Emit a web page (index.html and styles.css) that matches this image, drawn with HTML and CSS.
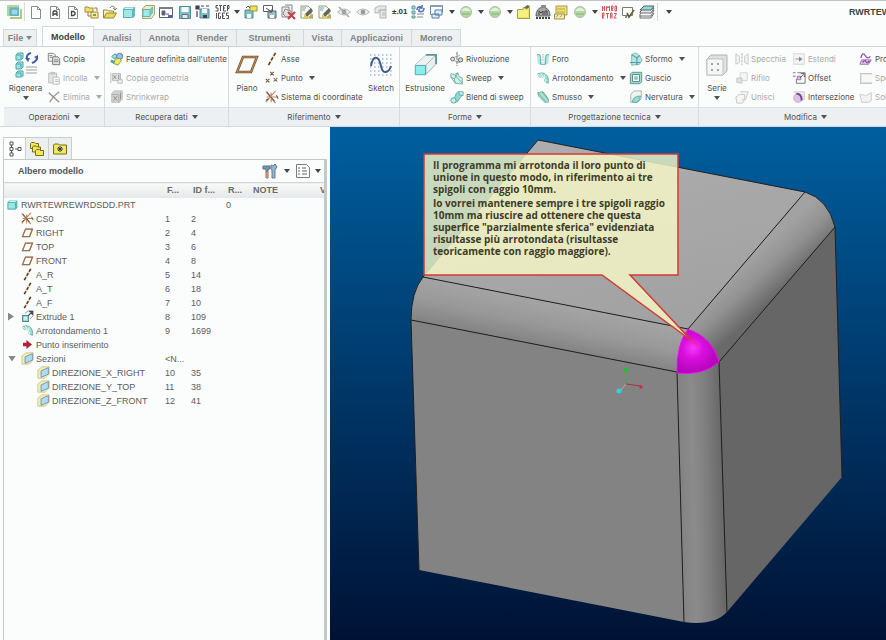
FILE: index.html
```
<!DOCTYPE html>
<html lang="it">
<head>
<meta charset="utf-8">
<meta name="viewport" content="width=device-width, initial-scale=1">
<title>RWRTEWREWRDSDD</title>
<link rel="stylesheet" href="styles.css">
</head>
<body>
<svg class="defs" aria-hidden="true">
  <defs>
    <symbol id="app" viewBox="0 0 16 16"><path d="M1 1h12v11H1z" fill="#a9cf8a"/><path d="M3 3h10v9H3z" fill="#66b7b8"/><path d="M5 5h7v6H5z" fill="#8fd0e8" stroke="#438b9b"/><path d="M4 14h11V5" fill="none" stroke="#9cc36c" stroke-width="2"/></symbol>
    <symbol id="page" viewBox="0 0 16 16"><path d="M3.500 2.500h6l3 3v9h-9z" fill="#fff" stroke="#777"/><path d="M9.500 2.500v3h3" fill="none" stroke="#777"/></symbol>
    <symbol id="page-a" viewBox="0 0 16 16"><use href="#page"/><path d="M6 12V8l1-1h2l1 1v4M6 10h4" fill="none" stroke="#222" stroke-width="1.300"/></symbol>
    <symbol id="page-d" viewBox="0 0 16 16"><use href="#page"/><path d="M6.500 7.500h2l1.500 1v2l-1.500 1h-2z" fill="none" stroke="#222" stroke-width="1.300"/></symbol>
    <symbol id="folders" viewBox="0 0 16 16"><path d="M1 3h3l1 1h4v4H1z" fill="#f1de4c" stroke="#8c7b24"/><path d="M7 8h7v6H7z" fill="#f7ec86" stroke="#8c7b24"/><path d="M4 8v4h3M10 4h3v3" fill="none" stroke="#a64f22"/><path d="M9 10h3v2H9z" fill="#6b8c3d"/></symbol>
    <symbol id="open" viewBox="0 0 16 16"><path d="M1.500 14V6h4l1 1h5v2" fill="#fff4a8" stroke="#7e7526"/><path d="M1.500 14l3-5h10l-3 5z" fill="#e7d437" stroke="#7e7526"/><path d="M8 4c2-3 5-2 5 1M11 4l2 2 2-2" fill="none" stroke="#6f783c"/></symbol>
    <symbol id="cube" viewBox="0 0 16 16"><path d="M2 5l2-2h10v9l-2 2H2z" fill="#50aeb0"/><path d="M2.500 5.500h9v8h-9z" fill="#8ee6e2" stroke="#4aa3a6"/><path d="M3 5l2-1.500h8L11.500 5z" fill="#c6f6f2"/></symbol>
    <symbol id="cube-sheet" viewBox="0 0 16 16"><path d="M5.500 1.500h9v9l-3 4h-9V5z" fill="#eee9ae" stroke="#99946a"/><path d="M3 5.500h7v7H3z" fill="#8ee6e2" stroke="#4aa3a6"/><path d="M10 5l3-3v7l-3 3z" fill="#5cb7b8"/></symbol>
    <symbol id="win" viewBox="0 0 16 16"><path d="M1.500 3.500h13v10h-13z" fill="#fff" stroke="#445"/><path d="M1 3h14v2H1z" fill="#667"/><path d="M4 7h3v4H4zM8 10h3" fill="#446" stroke="#446"/><path d="M10 12h5" stroke="#3a44b0" stroke-width="2"/></symbol>
    <symbol id="disk" viewBox="0 0 16 16"><path d="M2.500 2.500h11v12h-11z" fill="#62b9bc" stroke="#3d7478"/><path d="M4.500 3h7v5h-7z" fill="#f4ffff"/><path d="M5 10.500h6v4H5z" fill="#dce8e8" stroke="#557"/></symbol>
    <symbol id="disk-as" viewBox="0 0 16 16"><path d="M5 5h9v9H5z" fill="#62b9bc" stroke="#3d7478"/><path d="M7 5h5v4H7z" fill="#fff"/><path d="M1 2h3v3H1zM6 2h3M11 2h3M2 7v6" fill="#223" stroke="#223" stroke-width="1.200"/><path d="M8 11h4v3H8z" fill="#223"/></symbol>
    <symbol id="step" viewBox="0 0 16 16"><path d="M4 1.500H2v2.500h2v3H1.500M5 1.500h3M6.500 1.500V7M12 1.500H9.500V7H12M9.500 4H11M13.500 7V1.500H15v3h-1.500M2.500 9v5.500M6.500 9H4.500v5.500h2V12M11 9H8.500v5.500H11M8.500 12H10M14.500 9h-2v2.500h2v3h-2" fill="none" stroke="#333"/></symbol>
    <symbol id="disk-y" viewBox="0 0 16 16"><path d="M2 6h8v8H2z" fill="#64b8bb" stroke="#3d7478"/><path d="M4 10h4v4H4z" fill="#eff"/><path d="M7 2h7v5H7z" fill="#f1dc35" stroke="#8e801f"/><path d="M3 4l2-2 2 2" fill="none" stroke="#333"/></symbol>
    <symbol id="disk-w" viewBox="0 0 16 16"><path d="M1.500 1.500h9v6h-9z" fill="#fff" stroke="#444"/><path d="M6 7h8v7H6z" fill="#8bb9b9" stroke="#445"/><path d="M4 4l6 4M7 8h3V5" fill="none" stroke="#333"/><path d="M8 11h4v3H8z" fill="#fff"/></symbol>
    <symbol id="del" viewBox="0 0 16 16"><path d="M2 3h7v10H2zM5 1h7v10" fill="#eee" stroke="#777"/><path d="M5 5l6 2v5l-5 1-3-3z" fill="#ddd" stroke="#777"/><path d="M8 8l7 7M15 8l-7 7" stroke="#bd1d27" stroke-width="2"/></symbol>
    <symbol id="brush" viewBox="0 0 16 16"><path d="M2 2h7l3 3v9H2z" fill="#f8f8f1" stroke="#898966"/><path d="M6 10l6-6 2 3-6 6z" fill="#4b4e3a"/><path d="M5 10l4 4-4 1z" fill="#dbbe34"/><path d="M9 13l5-3v5z" fill="#b5a02c"/><path d="M3 4h4M3 6h3" stroke="#5b91bb"/></symbol>
    <symbol id="eye" viewBox="0 0 16 16"><path d="M1.500 8q6.500-6 13 0q-6.500 6-13 0z" fill="#eee" stroke="#aaa"/><circle cx="8" cy="8" r="2.300" fill="#888"/></symbol>
    <symbol id="eye-off" viewBox="0 0 16 16"><use href="#eye"/><path d="M3 3l10 10" stroke="#999" stroke-width="1.500"/></symbol>
    <symbol id="layers-g" viewBox="0 0 16 16"><path d="M2 4l4-2h7v4H6v3H2zM7 6h6v8H7z" fill="#e4e4e4" stroke="#aaa"/><path d="M9 9h3M9 11h3" stroke="#aaa"/></symbol>
    <symbol id="list-r" viewBox="0 0 16 16"><path d="M2 2h3v3H2zM2 7h3v3H2zM2 12h3v2H2z" fill="#7ddcda" stroke="#49898f"/><path d="M7 13h6M7 10h7" stroke="#777"/><path d="M7 6c0-4 4-4 5-2M14 4c0 4-4 5-5 2M12 1v3H9M9 8V5" fill="none" stroke="#315bb0" stroke-width="1.500"/></symbol>
    <symbol id="wins" viewBox="0 0 16 16"><path d="M1.500 1.500h12v7M1.500 1.500v9h3" fill="none" stroke="#567184"/><path d="M1 2h13" stroke="#6e94ad" stroke-width="2"/><path d="M6 6h7v5H6zM3 10h7v4H3z" fill="#dceefa" stroke="#38679d"/></symbol>
    <symbol id="ball" viewBox="0 0 16 16"><circle cx="8" cy="8" r="5.500" fill="#a8d094" stroke="#a4b39d"/><path d="M3 7q5-7 10 0z" fill="#dff0d5"/><path d="M4 10h8" stroke="#86bd76" stroke-width="2"/></symbol>
    <symbol id="fold" viewBox="0 0 16 16"><path d="M1.500 5.500h5l1-2h6v11h-12z" fill="#eadc3e" stroke="#998d2c"/><path d="M2 6h10v7H2z" fill="#f5ed72"/><path d="M8 4l3-3 3 1-3 3z" fill="#4c5144"/></symbol>
    <symbol id="gauge" viewBox="0 0 16 16"><path d="M1 12q0-8 7-9q7 1 7 9z" fill="#999" stroke="#444"/><path d="M4 11V7l2 2 2-2v4M10 11V7h2v4" fill="none" stroke="#222"/><path d="M1 14h14" stroke="#222" stroke-dasharray="2 1" stroke-width="2"/><path d="M6 1h5v3H6z" fill="#777"/></symbol>
    <symbol id="map" viewBox="0 0 16 16"><path d="M3 2h11v9H3z" fill="#f2dd55" stroke="#a08b32"/><path d="M1.500 10h10v5h-10z" fill="#efe6a1" stroke="#8d823e"/><path d="M4 8h8M4 5h8M3 13l2-2M7 13l2-2" stroke="#af9833"/></symbol>
    <symbol id="red" viewBox="0 0 16 16"><path d="M1.500 7V2M3.500 2v5M1.500 4h2M5.500 7V2l1.500 2 1.500-2v5M10.500 7V2h1.500v2.500h-1.500l1.500 2.500M14 2h1.500v5H14zM1.500 14.500V9H3v3H1.500L3 14.500M5 9.500h3M6.500 9.500v5M9.500 14.500V9h1.500v5.500M9.500 12H11M13 9.500h2.500L13 14h2.500" fill="none" stroke="#cc3942"/></symbol>
    <symbol id="check" viewBox="0 0 16 16"><path d="M2.500 3.500h10v8h-10z" fill="#fff" stroke="#665"/><path d="M5 13h2M7 9l2 4 5-7" fill="none" stroke="#4c4921" stroke-width="1.700"/></symbol>
    <symbol id="stack" viewBox="0 0 16 16"><path d="M1 10l4-4h10l-3 6H1z" fill="#fff" stroke="#555"/><path d="M1 8l4-4h10l-3 5H1z" fill="#d9e5e5" stroke="#555"/><path d="M1 6l4-4h10l-3 4z" fill="#82d5cf" stroke="#445"/><path d="M1 12v2h11l3-5" fill="none" stroke="#555"/></symbol>

    <symbol id="regen" viewBox="0 0 24 26"><g fill="#8ee6df" stroke="#3b9aa0"><path d="M2 3l2-2h5v5L7 8H2zM2 12l2-2h5v5l-2 2H2zM2 21l2-2h5v5l-2 1H2z"/><path d="M2 3h5v5M2 12h5v5M2 21h5v4"/></g><path d="M12 15h11M12 18h11M12 21h11" stroke="#999"/><path d="M13 7q-1-5 4-6M23 4q1 5-5 7" fill="none" stroke="#2f4d9d" stroke-width="2"/><path d="M11 6h5l-2 4zM20 5l4-2 0 5z" fill="#2f4d9d"/></symbol>
    <symbol id="copy" viewBox="0 0 16 16"><path d="M1.500 1.500h6l2 2v7h-8z" fill="#eee" stroke="#666"/><path d="M6.500 5.500h6l2 2v7h-8z" fill="#ddd" stroke="#555"/><path d="M8 9h5M8 11h5M3 4h3M3 6h3" stroke="#666"/></symbol>
    <symbol id="paste" viewBox="0 0 16 16"><path d="M2 2.500h9v11H2z" fill="#e2e2e2" stroke="#aaa"/><path d="M4 1h5v3H4z" fill="#bbb"/><path d="M7 7h6l1 1v7H7z" fill="#fff" stroke="#aaa"/><path d="M9 10h4M9 12h4" stroke="#aaa"/></symbol>
    <symbol id="cross" viewBox="0 0 16 16"><path d="M2 3l12 11M14 2Q8 6 3 14" fill="none" stroke="#888" stroke-width="1.600"/></symbol>
    <symbol id="udf" viewBox="0 0 16 16"><path d="M2 5l4-3 2 3-3 3z" fill="#8ce3d8" stroke="#26688f"/><circle cx="11" cy="5" r="3.500" fill="#87baf0" stroke="#2856a6"/><path d="M6 8l5-1 2 3-4 5-5-2z" fill="#f3e73b" stroke="#5b8f27"/><path d="M1 10l4 2" stroke="#38a" stroke-width="3"/></symbol>
    <symbol id="cgeo" viewBox="0 0 16 16"><path d="M1 2v12M3 3h9v8H3z" fill="#ddd" stroke="#aaa"/><path d="M4 5l3 4M7 5l-3 4M10 4v5" stroke="#777"/><path d="M9 10h5v4H9z" fill="#eee" stroke="#aaa"/></symbol>
    <symbol id="shrink" viewBox="0 0 16 16"><path d="M2 4l3-3h9v9l-3 4H2z" fill="#ccc" stroke="#aaa"/><path d="M2 5h8v9" fill="none" stroke="#999"/><path d="M4 7l4 5M8 7l-4 5M12 3v8" stroke="#777"/></symbol>
    <symbol id="plane" viewBox="0 0 24 20"><path d="M8 2h14l-6 15H2z" fill="none" stroke="#6e4320" stroke-width="2.500"/><path d="M8 2h14l-6 15H2z" fill="none" stroke="#d8a35d" stroke-width=".7"/></symbol>
    <symbol id="axis" viewBox="0 0 16 16"><path d="M12 1L4 15" fill="none" stroke="#f0b37d" stroke-width="3" opacity=".5"/><path d="M12 1L4 15" fill="none" stroke="#302010" stroke-width="1.700" stroke-dasharray="4 2"/></symbol>
    <symbol id="points" viewBox="0 0 16 16"><path d="M6 1l4 4M10 1L6 5M1 9l4 4M5 9l-4 4M10 8l4 4M14 8l-4 4" stroke="#4c2e1c" stroke-width="1.200"/><path d="M8 3h.5M3 11h.5M12 10h.5" stroke="#e18a34" stroke-width="2"/></symbol>
    <symbol id="csys" viewBox="0 0 16 16"><path d="M1 2l5 6-5 6M2 8h13M6 8l6-7M6 8l6 7M7 3v11" fill="none" stroke="#b97242" stroke-width="1.300"/><path d="M2 2l4 5M7 8l4 5M1 12l3-2M13 6l2 4" stroke="#4f3a2e" stroke-width="1.200"/></symbol>
    <symbol id="sketch" viewBox="0 0 24 24"><path d="M1 2h22M1 6h22M1 10h22M1 14h22M1 18h22M1 22h22" stroke="#8fb1d6" stroke-width="1.500" stroke-dasharray="1.500 2.500"/><path d="M2 13c2-12 8-10 10 0s8 6 10 0" fill="none" stroke="#2e4c80" stroke-width="2"/></symbol>
    <symbol id="extr" viewBox="0 0 26 26"><path d="M2 13L14 2h11v10L13 24" fill="#e9f2f2" stroke="#bbb"/><path d="M14 13L25 2v10L14 23z" fill="#e3efee" stroke="#aaa"/><path d="M14 2h11v10" fill="none" stroke="#4a8e91" stroke-width="2"/><path d="M2.500 13.500h11v10h-11z" fill="#7eeee9" stroke="#3c9ca2"/></symbol>
    <symbol id="revolve" viewBox="0 0 16 16"><path d="M8 0v16" stroke="#444" stroke-dasharray="4 1"/><circle cx="3" cy="8" r="2.200" fill="#ddd" stroke="#444"/><path d="M5 6l6-2M5 10l6 2" stroke="#777"/><circle cx="12" cy="9" r="2.500" fill="#b9d6d3" stroke="#444"/></symbol>
    <symbol id="sweep" viewBox="0 0 16 16"><path d="M1 3l4 1 4-2 1 4 4 2v7l-8-1-1-5-4-2z" fill="#c9efe6" stroke="#5f9a90"/><path d="M5 4l9 10M1 7l5 7M9 2L5 9" fill="none" stroke="#3e9988"/></symbol>
    <symbol id="blend" viewBox="0 0 16 16"><path d="M2 10c6-1 3-7 8-8l5 4c-5 1-3 7-9 8z" fill="#79d8c6" stroke="#3c9289"/><circle cx="4" cy="12" r="3" fill="#baf3e7" stroke="#379186"/><path d="M10 2h5v4h-4z" fill="#c1f0ea" stroke="#499"/></symbol>
    <symbol id="hole" viewBox="0 0 16 16"><path d="M1 3h5v3l1 8H2zM15 3h-5v3L9 14h5z" fill="#a4ebe0"/><path d="M1 3h3l1 3v8h6V6l1-3h3" fill="none" stroke="#41988f"/><path d="M8 2v10" stroke="#999" stroke-dasharray="2 1"/></symbol>
    <symbol id="round" viewBox="0 0 16 16"><path d="M2 3q9-3 12 5v6l-4-2Q11 6 4 7z" fill="#8eddca" stroke="#519d90"/><path d="M2 3l3 4q5-2 6 6M5 2l3 5M10 4l-1 5" fill="none" stroke="#eafff8"/></symbol>
    <symbol id="chamfer" viewBox="0 0 16 16"><path d="M2 3l6-1 6 8v4h-4L3 7z" fill="#97dfcb" stroke="#669b92"/><path d="M2 3l9 10M7 2l7 9" stroke="#4b978a"/></symbol>
    <symbol id="draft" viewBox="0 0 16 16"><path d="M3 11V3l5-2 4 3 3 5-3 5-9 1z" fill="#a5e5da" stroke="#6ba89f"/><path d="M3 3l6 4v8M9 7l3-3M1 12h12" fill="none" stroke="#3a87a2" stroke-width="1.300"/></symbol>
    <symbol id="shell" viewBox="0 0 16 16"><path d="M1.500 3.500l2-2h11v11l-2 2h-11z" fill="#8fd9ce" stroke="#377d77"/><path d="M4 4h8v8H4z" fill="#e8fffb" stroke="#356d69"/><path d="M6 6h4v4H6z" fill="#75bab1"/></symbol>
    <symbol id="rib" viewBox="0 0 16 16"><path d="M2 5l4-4h8v9l-4 4H2z" fill="#eef3f2" stroke="#8aa39f"/><path d="M4 14c0-6 5-7 9-7l-1 4-3 3z" fill="#7fdacb" stroke="#468f87"/></symbol>
    <symbol id="pattern" viewBox="0 0 24 24"><path d="M2 6l4-4h16v16l-4 4H2z" fill="#ddd" stroke="#aaa"/><path d="M2 6h16v16H2z" fill="#f6f6f6" stroke="#bbb"/><path d="M6 10h2v2H6zM12 10h2v2h-2zM6 16h2v2H6zM12 16h2v2h-2z" fill="#999"/></symbol>
    <symbol id="mirror" viewBox="0 0 16 16"><path d="M8 1v14" stroke="#999" stroke-dasharray="3 1"/><path d="M1 2l4 3v7l-4 2zM15 2l-4 3v7l4 2z" fill="#f1f1f1" stroke="#bbb"/></symbol>
    <symbol id="trim" viewBox="0 0 16 16"><path d="M6 2h8v9H6z" fill="#f5f5f5" stroke="#ccc"/><path d="M2 8h6v6l-6-1z" fill="#ddd" stroke="#bbb"/></symbol>
    <symbol id="merge" viewBox="0 0 16 16"><path d="M6 2h9l-3 9H8M1 8l4-3h6v6l-3 4H2z" fill="#f5f5f5" stroke="#bbb"/></symbol>
    <symbol id="extend" viewBox="0 0 16 16"><path d="M2 2h12v12H2z" fill="#f4f4f4" stroke="#ccc"/><path d="M4 8h5" stroke="#777"/><path d="M8 5l4 3-4 3z" fill="#777"/></symbol>
    <symbol id="offset" viewBox="0 0 16 16"><path d="M1 2h3M6 2h9v12H5V9M1 6h3" fill="none" stroke="#555"/><path d="M6 6h4v4H6z" fill="#d6b9e1" stroke="#8a4ba0"/><path d="M9 8l4-4M10 3h4v4" fill="none" stroke="#333"/></symbol>
    <symbol id="inters" viewBox="0 0 16 16"><path d="M2 2h12v9H9" fill="#eee" stroke="#bbb"/><circle cx="7" cy="9" r="5" fill="#d8b9dd" stroke="#ba91c2"/><path d="M5 4q6 0 6 8" fill="none" stroke="#5a2679" stroke-width="2"/></symbol>
    <symbol id="project" viewBox="0 0 16 16"><path d="M3 9h11l-3 5H1z" fill="#e5c6ed" stroke="#8e45a3"/><path d="M2 7q2-8 5-3t6 1M4 12q3-4 4-1t4-1" fill="none" stroke="#793090" stroke-width="1.500"/></symbol>
    <symbol id="thick" viewBox="0 0 16 16"><path d="M15 3H2v11h13" fill="#f7f7f7" stroke="#bbb" stroke-width="1.500"/></symbol>
    <symbol id="solid" viewBox="0 0 16 16"><path d="M1 5l5 1q1 2 3 0l5-3v9l-3 2H3z" fill="#f2f2f2" stroke="#bbb"/></symbol>

    <symbol id="tree" viewBox="0 0 16 16"><path d="M3 1h3v3H3zM3 6.500h3v3H3zM3 12h3v3H3zM11 6.500h3v3h-3zM4.500 4v2.500M4.500 9.500V12M8 8h3" fill="none" stroke="#555"/></symbol>
    <symbol id="foldstack" viewBox="0 0 16 16"><g fill="#efe95a" stroke="#7a6d20"><path d="M1.500 2.500l1-1h3l1 1h3v5h-8z"/><path d="M3.500 6l1-1h3l1 1h3v5h-8z"/><path d="M6.500 9.500l1-1h3l1 1h3v5h-8z"/></g></symbol>
    <symbol id="foldstar" viewBox="0 0 16 16"><path d="M1.500 4l1-1h4l1 1h7v9h-13z" fill="#efe95a" stroke="#7a6d20"/><path d="M8 5v6M5 8h6M6 6l4 4M10 6l-4 4" stroke="#26365e"/></symbol>
    <symbol id="tools" viewBox="0 0 16 16"><path d="M1 3h7v3H6v9H4V6H1z" fill="#5387ac" stroke="#456"/><path d="M9 6V2l2 1 2-2 2 3-2 3v8h-3V7z" fill="#7eabc9" stroke="#567"/><path d="M4 9h2v6H4z" fill="#d1783a"/></symbol>
    <symbol id="sheet" viewBox="0 0 16 16"><path d="M1.500 1.500h10l3 3v10h-13z" fill="#fff" stroke="#666"/><path d="M3 5h2M3 8h2M3 11h2M7 5h4M7 8h5M7 11h5" stroke="#444" stroke-width="1.200"/></symbol>
    <symbol id="extr-s" viewBox="0 0 16 16"><path d="M2 7h7v7H2z" fill="#bff1ec" stroke="#39858c" stroke-width="1.500"/><path d="M5 4l4-3h6v6l-4 4" fill="none" stroke="#4d898d"/><path d="M10 2h4v4M9 7l5-5" fill="none" stroke="#333" stroke-width="1.500"/></symbol>
    <symbol id="arrow" viewBox="0 0 16 16"><path d="M0 5h6V0l10 8-10 8v-5H0z" fill="#a80f22"/></symbol>
    <symbol id="section" viewBox="0 0 16 16"><path d="M1 5l5-4h9v9l-5 5H1z" fill="#f1edaa" stroke="#cbbc80"/><path d="M5 6l9-4v8l-9 4z" fill="#a8d8f6" stroke="#5b7c96"/></symbol>
  </defs>
</svg>

<div class="app">
  <header class="quickbar">
    <button class="ic app-ic" aria-label="Menu"><svg><use href="#app"/></svg></button>
    <span class="sep"></span>
    <div class="set eleven first">
      <button class="ic" aria-label="Nuovo"><svg><use href="#page"/></svg></button>
      <button class="ic" aria-label="Nuovo assieme"><svg><use href="#page-a"/></svg></button>
      <button class="ic" aria-label="Nuovo disegno"><svg><use href="#page-d"/></svg></button>
      <button class="ic" aria-label="Cartelle"><svg><use href="#folders"/></svg></button>
      <button class="ic" aria-label="Apri"><svg><use href="#open"/></svg></button>
      <button class="ic" aria-label="Parte"><svg><use href="#cube"/></svg></button>
      <button class="ic" aria-label="Assieme"><svg><use href="#cube-sheet"/></svg></button>
      <button class="ic" aria-label="Finestra"><svg><use href="#win"/></svg></button>
      <button class="ic" aria-label="Salva"><svg><use href="#disk"/></svg></button>
      <button class="ic" aria-label="Salva copia"><svg><use href="#disk-as"/></svg></button>
      <button class="ic" aria-label="Step Iges"><svg><use href="#step"/></svg></button>
    </div>
    <button class="drop" aria-label="Altro"></button>
    <div class="set eleven">
      <button class="ic" aria-label="Backup"><svg><use href="#disk-y"/></svg></button>
      <button class="ic" aria-label="Rinomina"><svg><use href="#disk-w"/></svg></button>
      <button class="ic" aria-label="Cancella"><svg><use href="#del"/></svg></button>
      <button class="ic" aria-label="Pulisci"><svg><use href="#brush"/></svg></button>
      <button class="ic" aria-label="Pulisci tutto"><svg><use href="#brush"/></svg></button>
      <button class="ic" aria-label="Nascondi"><svg><use href="#eye-off"/></svg></button>
      <button class="ic" aria-label="Mostra"><svg><use href="#eye"/></svg></button>
      <button class="ic" aria-label="Layer"><svg><use href="#layers-g"/></svg></button>
      <button class="ic tol">±.01</button>
      <button class="ic" aria-label="Rigenera"><svg><use href="#list-r"/></svg></button>
      <button class="ic" aria-label="Finestre"><svg><use href="#wins"/></svg></button>
    </div>
    <button class="drop" aria-label="Altro"></button>
    <button class="ic" aria-label="Aspetto"><svg><use href="#ball"/></svg></button>
    <button class="drop" aria-label="Altro"></button>
    <button class="ic" aria-label="Scena"><svg><use href="#ball"/></svg></button>
    <button class="drop" aria-label="Altro"></button>
    <div class="set four">
      <button class="ic" aria-label="Cartella"><svg><use href="#fold"/></svg></button>
      <button class="ic" aria-label="Massa"><svg><use href="#gauge"/></svg></button>
      <button class="ic" aria-label="Misura"><svg><use href="#map"/></svg></button>
      <button class="ic" aria-label="Colore"><svg><use href="#ball"/></svg></button>
    </div>
    <button class="drop" aria-label="Altro"></button>
    <div class="set three">
      <button class="ic" aria-label="Parametri"><svg><use href="#red"/></svg></button>
      <button class="ic" aria-label="Verifica"><svg><use href="#check"/></svg></button>
      <button class="ic" aria-label="Livelli"><svg><use href="#stack"/></svg></button>
    </div>
    <span class="sep"></span>
    <button class="drop wide" aria-label="Personalizza"></button>
    <strong class="doc">RWRTEWREWRDSDD</strong>
  </header>

  <nav class="tabs">
    <button class="file">File<i class="caret"></i></button>
    <button class="tab on">Modello</button>
    <button class="tab">Analisi</button>
    <button class="tab">Annota</button>
    <button class="tab">Render</button>
    <button class="tab strum">Strumenti</button>
    <button class="tab">Vista</button>
    <button class="tab">Applicazioni</button>
    <button class="tab">Moreno</button>
  </nav>

  <section class="ribbon">
    <div class="group g1">
      <div class="body">
        <button class="big w43"><svg><use href="#regen"/></svg><span>Rigenera</span><i class="caret"></i></button>
        <div class="col">
          <button class="cmd"><svg><use href="#copy"/></svg>Copia</button>
          <button class="cmd off"><svg><use href="#paste"/></svg>Incolla<i class="caret"></i></button>
          <button class="cmd off"><svg><use href="#cross"/></svg>Elimina<i class="caret"></i></button>
        </div>
      </div>
      <button class="foot">Operazioni<i class="caret"></i></button>
    </div>
    <div class="group g2">
      <div class="body pad">
        <div class="col">
          <button class="cmd"><svg><use href="#udf"/></svg>Feature definita dall'utente</button>
          <button class="cmd off"><svg><use href="#cgeo"/></svg>Copia geometria</button>
          <button class="cmd off"><svg><use href="#shrink"/></svg>Shrinkwrap</button>
        </div>
      </div>
      <button class="foot">Recupera dati<i class="caret"></i></button>
    </div>
    <div class="group g3">
      <div class="body">
        <button class="big w36"><svg><use href="#plane"/></svg><span>Piano</span></button>
        <div class="col w98">
          <button class="cmd"><svg><use href="#axis"/></svg>Asse</button>
          <button class="cmd"><svg><use href="#points"/></svg>Punto<i class="caret"></i></button>
          <button class="cmd"><svg><use href="#csys"/></svg>Sistema di coordinate</button>
        </div>
        <button class="big w36"><svg><use href="#sketch"/></svg><span>Sketch</span></button>
      </div>
      <button class="foot">Riferimento<i class="caret"></i></button>
    </div>
    <div class="group g4">
      <div class="body">
        <button class="big w50"><svg><use href="#extr"/></svg><span>Estrusione</span></button>
        <div class="col">
          <button class="cmd"><svg><use href="#revolve"/></svg>Rivoluzione</button>
          <button class="cmd"><svg><use href="#sweep"/></svg>Sweep<i class="caret"></i></button>
          <button class="cmd"><svg><use href="#blend"/></svg>Blend di sweep</button>
        </div>
      </div>
      <button class="foot">Forme<i class="caret"></i></button>
    </div>
    <div class="group g5">
      <div class="body pad">
        <div class="col w93">
          <button class="cmd"><svg><use href="#hole"/></svg>Foro</button>
          <button class="cmd"><svg><use href="#round"/></svg>Arrotondamento<i class="caret"></i></button>
          <button class="cmd"><svg><use href="#chamfer"/></svg>Smusso<i class="caret"></i></button>
        </div>
        <div class="col">
          <button class="cmd"><svg><use href="#draft"/></svg>Sformo<i class="caret"></i></button>
          <button class="cmd"><svg><use href="#shell"/></svg>Guscio</button>
          <button class="cmd"><svg><use href="#rib"/></svg>Nervatura<i class="caret"></i></button>
        </div>
      </div>
      <button class="foot">Progettazione tecnica<i class="caret"></i></button>
    </div>
    <div class="group g6">
      <div class="body">
        <button class="big w36"><svg><use href="#pattern"/></svg><span>Serie</span><i class="caret"></i></button>
        <div class="col w57">
          <button class="cmd off"><svg><use href="#mirror"/></svg>Specchia</button>
          <button class="cmd off"><svg><use href="#trim"/></svg>Rifilo</button>
          <button class="cmd off"><svg><use href="#merge"/></svg>Unisci</button>
        </div>
        <div class="col w67">
          <button class="cmd off"><svg><use href="#extend"/></svg>Estendi</button>
          <button class="cmd"><svg><use href="#offset"/></svg>Offset</button>
          <button class="cmd"><svg><use href="#inters"/></svg>Intersezione</button>
        </div>
        <div class="col">
          <button class="cmd"><svg><use href="#project"/></svg>Proietta</button>
          <button class="cmd off"><svg><use href="#thick"/></svg>Spessore</button>
          <button class="cmd off"><svg><use href="#solid"/></svg>Solidifica</button>
        </div>
      </div>
      <button class="foot">Modifica<i class="caret"></i></button>
    </div>
  </section>

  <main class="work">
    <aside class="side">
      <div class="side-tabs">
        <button class="stab on" aria-label="Albero modello"><svg><use href="#tree"/></svg></button>
        <button class="stab" aria-label="Cartelle"><svg><use href="#foldstack"/></svg></button>
        <button class="stab" aria-label="Preferiti"><svg><use href="#foldstar"/></svg></button>
      </div>
      <div class="panel">
        <div class="panel-head">
          <h2>Albero modello</h2>
          <button class="ic" aria-label="Impostazioni"><svg><use href="#tools"/></svg></button>
          <button class="drop wide" aria-label="Altro"></button>
          <button class="ic" aria-label="Mostra"><svg><use href="#sheet"/></svg></button>
          <button class="drop" aria-label="Altro"></button>
        </div>
        <table>
          <colgroup><col class="c0"><col class="c1"><col class="c2"><col class="c3"><col class="c4"><col></colgroup>
          <thead><tr><th></th><th>F...</th><th>ID f...</th><th>R...</th><th>NOTE</th><th>V</th></tr></thead>
          <tbody>
            <tr><td><span class="node root"><svg><use href="#cube"/></svg>RWRTEWREWRDSDD.PRT</span></td><td></td><td></td><td>0</td><td></td><td></td></tr>
            <tr><td><span class="node"><svg><use href="#csys"/></svg>CS0</span></td><td>1</td><td>2</td><td></td><td></td><td></td></tr>
            <tr><td><span class="node"><svg class="pl"><use href="#plane"/></svg>RIGHT</span></td><td>2</td><td>4</td><td></td><td></td><td></td></tr>
            <tr><td><span class="node"><svg class="pl"><use href="#plane"/></svg>TOP</span></td><td>3</td><td>6</td><td></td><td></td><td></td></tr>
            <tr><td><span class="node"><svg class="pl"><use href="#plane"/></svg>FRONT</span></td><td>4</td><td>8</td><td></td><td></td><td></td></tr>
            <tr><td><span class="node"><svg><use href="#axis"/></svg>A_R</span></td><td>5</td><td>14</td><td></td><td></td><td></td></tr>
            <tr><td><span class="node"><svg><use href="#axis"/></svg>A_T</span></td><td>6</td><td>18</td><td></td><td></td><td></td></tr>
            <tr><td><span class="node"><svg><use href="#axis"/></svg>A_F</span></td><td>7</td><td>10</td><td></td><td></td><td></td></tr>
            <tr><td><span class="node"><button class="twist shut" aria-label="Espandi"></button><svg><use href="#extr-s"/></svg>Extrude 1</span></td><td>8</td><td>109</td><td></td><td></td><td></td></tr>
            <tr><td><span class="node"><svg><use href="#round"/></svg>Arrotondamento 1</span></td><td>9</td><td>1699</td><td></td><td></td><td></td></tr>
            <tr><td><span class="node"><svg class="pt"><use href="#arrow"/></svg>Punto inserimento</span></td><td></td><td></td><td></td><td></td><td></td></tr>
            <tr><td><span class="node"><button class="twist" aria-label="Comprimi"></button><svg><use href="#section"/></svg>Sezioni</span></td><td>&lt;N...</td><td></td><td></td><td></td><td></td></tr>
            <tr><td><span class="node deep"><svg><use href="#section"/></svg>DIREZIONE_X_RIGHT</span></td><td>10</td><td>35</td><td></td><td></td><td></td></tr>
            <tr><td><span class="node deep"><svg><use href="#section"/></svg>DIREZIONE_Y_TOP</span></td><td>11</td><td>38</td><td></td><td></td><td></td></tr>
            <tr><td><span class="node deep"><svg><use href="#section"/></svg>DIREZIONE_Z_FRONT</span></td><td>12</td><td>41</td><td></td><td></td><td></td></tr>
          </tbody>
        </table>
      </div>
    </aside>
    <section class="view">
      <svg class="model" viewBox="330 127 556 513" preserveAspectRatio="xMinYMin slice" role="img" aria-label="Cubo con spigoli arrotondati">
        <defs>
          <linearGradient id="gl" gradientUnits="userSpaceOnUse" x1="555" y1="303" x2="546" y2="347"><stop offset="0" stop-color="#a4a4a4"/><stop offset=".5" stop-color="#999"/><stop offset="1" stop-color="#838383"/></linearGradient>
          <linearGradient id="gr" gradientUnits="userSpaceOnUse" x1="747" y1="260" x2="778" y2="294"><stop offset="0" stop-color="#a2a2a2"/><stop offset=".45" stop-color="#929292"/><stop offset="1" stop-color="#696969"/></linearGradient>
          <linearGradient id="gv" gradientUnits="userSpaceOnUse" x1="681" y1="490" x2="723" y2="489"><stop offset="0" stop-color="#838383"/><stop offset=".3" stop-color="#8b8b8b"/><stop offset=".65" stop-color="#7d7d7d"/><stop offset="1" stop-color="#676767"/></linearGradient>
          <linearGradient id="gt" gradientUnits="userSpaceOnUse" x1="560" y1="140" x2="600" y2="330"><stop offset="0" stop-color="#adadad"/><stop offset="1" stop-color="#a2a2a2"/></linearGradient>
          <radialGradient id="gm" gradientUnits="userSpaceOnUse" cx="693" cy="348" r="30"><stop offset="0" stop-color="#fa38fa"/><stop offset=".35" stop-color="#d90fdd"/><stop offset="1" stop-color="#a900b2"/></radialGradient>
        </defs>
        <path d="M411 320L677 372L684 622L419 570z" fill="#838383"/>
        <path d="M719 362L835 227L842 477L727 612z" fill="#666"/>
        <path d="M538 140L805 192L688 329L423 277z" fill="url(#gt)"/>
        <path d="M423 277L688 329Q677 345 677 372L411 320Q411 292 423 277z" fill="url(#gl)"/>
        <path d="M805 192L688 329Q712 337 719 362L835 227Q828 199 805 192z" fill="url(#gr)"/>
        <path d="M677 372Q704 376 719 362L727 612Q714 626 684 622z" fill="url(#gv)"/>
        <g fill="none" stroke="#202020">
          <path d="M423 277L538 140L805 192Q828 199 835 227L842 477"/>
          <path d="M423 277L688 329L805 192M423 277Q411 292 411 320L677 372L684 622M719 362L727 612M719 362L835 227M411 320L419 570" />
        </g>
        <path d="M688 329Q713 338 719 362Q703 376 677 373Q676 345 688 329z" fill="url(#gm)" stroke="#ee12ee"/>
        <path d="M424 154H678V275H630L692 341L602 275H424z" fill="#fafac8" fill-opacity=".8" stroke="#cf3b35" stroke-width="1.500"/>
        <path d="M691 340l6 5" stroke="#ff2090" stroke-width="1.500"/>
        <path d="M626 384V371" stroke="#3fae4d"/><path d="M626 384l15 2" stroke="#a3344d"/><path d="M626 384l-6 7" stroke="#aaa"/>
        <circle cx="626" cy="370" r="2.300" fill="#29bd35"/><circle cx="641" cy="387" r="1.700" fill="#ce2848"/><circle cx="619" cy="391" r="2.500" fill="#2fd3dc"/>
      </svg>
      <div class="note">
        <p>Il programma mi arrotonda il loro punto di<br>unione in questo modo, in riferimento ai tre<br>spigoli con raggio 10mm.</p>
        <p>Io vorrei mantenere sempre i tre spigoli raggio<br>10mm ma riuscire ad ottenere che questa<br>superfice "parzialmente sferica" evidenziata<br>risultasse più arrotondata (risultasse<br>teoricamente con raggio maggiore).</p>
      </div>
    </section>
  </main>
</div>
</body>
</html>
```
FILE: styles.css
```
* { box-sizing: border-box; }
body {
  margin: 0;
  background: #fbfcfc;
  color: #505050;
  font: 9px/12px "Liberation Sans", sans-serif;
}
button {
  margin: 0;
  padding: 0;
  border: 0;
  background: none;
  color: inherit;
  font: inherit;
  white-space: nowrap;
}
svg { display: block; }
.defs { position: absolute; width: 0; height: 0; }
.app {
  display: flex;
  flex-direction: column;
  height: 100vh;
  overflow: hidden;
  border-top: 1px solid #c4c4c4;
}

.quickbar {
  display: flex;
  align-items: center;
  flex: none;
  height: 22px;
  padding-left: 6px;
}
.ic { flex: none; width: 16px; height: 16px; }
.ic svg { width: 16px; height: 16px; opacity: .85; }
.ic.tol { display: flex; align-items: center; justify-content: center; font-size: 8px; font-weight: bold; color: #333; }
.sep { width: 1px; height: 18px; margin: 0 2px; background: #d5d9d9; }
.set { display: flex; flex: none; justify-content: space-between; }
.eleven { width: 202px; }
.four { width: 72px; }
.three { width: 54px; }
.first { margin-left: 1px; }
.drop {
  display: flex;
  flex: none;
  align-items: center;
  justify-content: center;
  width: 13px;
  height: 16px;
}
.drop.wide { width: 17px; }
.caret { flex: none; }
.drop::before, .caret {
  content: "";
  display: inline-block;
  border: 3px solid transparent;
  border-top: 4px solid currentColor;
  border-bottom: 0;
}
.drop::before { color: #444; }
.doc {
  flex: none;
  width: 37px;
  margin-left: auto;
  overflow: hidden;
  white-space: nowrap;
  color: #444;
}

.tabs {
  display: flex;
  align-items: flex-end;
  flex: none;
  height: 24px;
  padding-left: 3px;
  border-bottom: 1px solid #cfd2d3;
}
.tabs button {
  height: 17px;
  border: solid #d3d8da;
  border-width: 1px 1px 0 0;
  background: #edf0f1;
  color: #808486;
  font-weight: bold;
}
.tabs .file { width: 34px; margin-right: 5px; border-left-width: 1px; }
.file .caret { margin: 0 0 1px 3px; }
.tabs .tab { padding: 0 8px; }
.tabs .on {
  height: 20px;
  border-left-width: 1px;
  background: #fcfdfd;
  color: #3d3d3d;
}
.tabs .strum { padding: 0 12px; }

.ribbon {
  display: flex;
  flex: none;
  height: 80px;
  padding-left: 4px;
  overflow: hidden;
  border-bottom: 1px solid #d4d7d8;
  font-family: Inter, sans-serif;
  font-size: 8px;
}
.group {
  display: flex;
  flex: none;
  flex-direction: column;
  border-right: 1px solid #d9dcdd;
}
.g1 { width: 101px; }
.g2 { width: 124px; }
.g3 { width: 171px; }
.g4 { width: 131px; }
.g5 { width: 168px; }
.g6 { width: 214px; }
.body { display: flex; flex: 1; padding-top: 2px; }
.body.pad { padding-left: 5px; }
.foot {
  height: 19px;
  border-top: 1px solid #dfe2e3;
  background: #edf0f2;
}
.foot .caret { margin: 0 0 1px 4px; }
.big {
  display: flex;
  flex: none;
  flex-direction: column;
  align-items: center;
  padding-top: 3px;
}
.big svg { width: 24px; height: 26px; margin-bottom: 4px; opacity: .9; }
.big .caret { margin-top: 2px; }
.w36 { width: 36px; }
.w43 { width: 43px; }
.w50 { width: 50px; }
.col { display: grid; grid-template-rows: repeat(3, 19px); align-content: start; justify-items: start; }
.w57 { width: 57px; }
.w67 { width: 67px; }
.w93 { width: 93px; }
.w98 { width: 98px; }
.cmd { display: flex; align-items: center; }
.cmd svg { flex: none; width: 14px; height: 14px; margin-right: 2px; opacity: .85; }
.cmd .caret { margin-left: 6px; }
.off { color: #aaa; }

.work { display: flex; flex: 1; min-height: 0; }
.side {
  display: flex;
  flex: 0 0 330px;
  flex-direction: column;
  padding: 10px 3px 0 3px;
}
.side-tabs { display: flex; flex: none; height: 22px; }
.stab {
  display: flex;
  align-items: center;
  justify-content: center;
  width: 23px;
  border: solid #c9cdce;
  border-width: 1px 1px 0 0;
  background: #eceff0;
}
.stab.on { border-left-width: 1px; background: #fcfdfd; }
.stab svg { width: 16px; height: 16px; }
.panel {
  flex: 1;
  border: solid #c4c8c9;
  border-width: 1px 3px 0 1px;
}
.panel-head {
  display: flex;
  align-items: center;
  height: 22px;
  padding-left: 14px;
}
.panel-head h2 { flex: 1; margin: 0; font-size: 9px; color: #555; }
table { width: 100%; border-collapse: collapse; table-layout: fixed; color: #5c5c5c; }
.c0 { width: 160px; }
.c1 { width: 26px; }
.c2 { width: 35px; }
.c3 { width: 25px; }
.c4 { width: 70px; }
th {
  height: 15px;
  padding: 0 0 0 3px;
  overflow: hidden;
  border-top: 1px solid #d2d5d6;
  background: linear-gradient(#f8f9f9, #e4e7e8);
  color: #6a6a6a;
  text-align: left;
  white-space: nowrap;
}
th:last-child { padding-left: 0; }
td { height: 14px; padding: 0 0 0 1px; white-space: nowrap; }
td:first-child { padding: 0; }
.node { display: flex; align-items: center; padding-left: 17px; }
.node svg { flex: none; width: 13px; height: 13px; margin-right: 2px; opacity: .9; }
.node .pl { height: 10px; }
.node.root { padding-left: 2px; }
.node.deep { padding-left: 33px; }
.node .pt { width: 9px; height: 9px; margin: 0 4px 0 2px; }
.twist {
  width: 8px;
  height: 6px;
  margin: 0 5px 0 -13px;
  background: #888;
  clip-path: polygon(0 0, 100% 0, 50% 100%);
}
.twist.shut { width: 6px; height: 8px; margin: 0 7px 0 -13px; clip-path: polygon(0 0, 100% 50%, 0 100%); }

.view {
  position: relative;
  flex: 1;
  min-width: 0;
  overflow: hidden;
  background: linear-gradient(#005f9f, #003464 55%, #001234);
}
.model { width: 100%; height: 100%; }
.note {
  position: absolute;
  top: 32px;
  left: 103px;
  color: #3c3c26;
  font: bold 10px/12px "Open Sans", sans-serif;
  white-space: nowrap;
}
.note p { margin: 0 0 2px; }
```
